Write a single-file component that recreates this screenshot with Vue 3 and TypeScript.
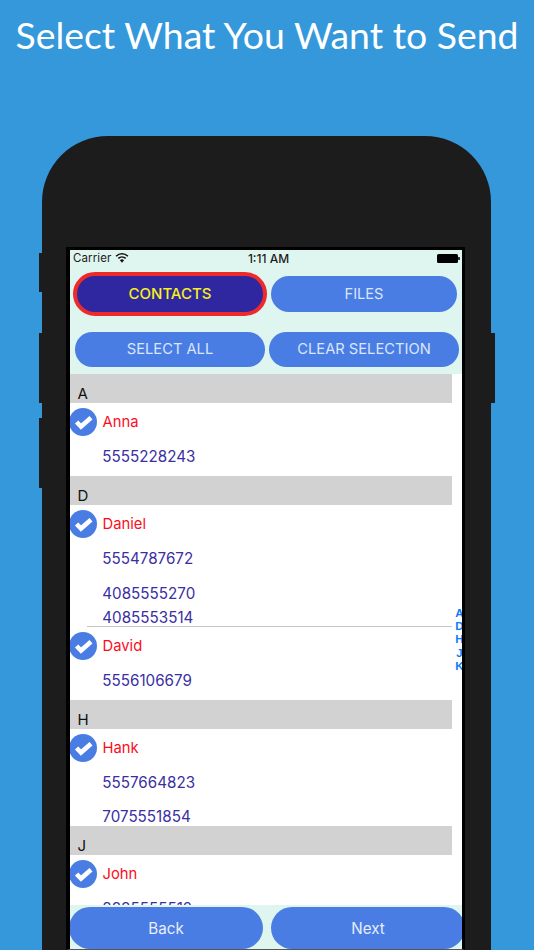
<script setup lang="ts">
interface Phone { num: string; gap: number }
interface Contact { name: string; phones: Phone[]; pad: number; divider?: boolean }
interface Section { letter: string; contacts: Contact[] }

const sections: Section[] = [
  { letter: 'A', contacts: [{ name: 'Anna', pad: 10, phones: [{ num: '5555228243', gap: 10 }] }] },
  {
    letter: 'D',
    contacts: [
      {
        name: 'Daniel',
        pad: 0,
        divider: true,
        phones: [
          { num: '5554787672', gap: 10 },
          { num: '4085555270', gap: 15 },
          { num: '4085553514', gap: 4 },
        ],
      },
      { name: 'David', pad: 10, phones: [{ num: '5556106679', gap: 10 }] },
    ],
  },
  {
    letter: 'H',
    contacts: [
      {
        name: 'Hank',
        pad: 0,
        phones: [
          { num: '5557664823', gap: 10 },
          { num: '7075551854', gap: 14 },
        ],
      },
    ],
  },
  { letter: 'J', contacts: [{ name: 'John', pad: 10, phones: [{ num: '8885555512', gap: 10 }] }] },
]
const indexLetters = ['A', 'D', 'H', 'J', 'K']
</script>

<template>
  <div class="page">
    <h1 class="title">Select What You Want to Send</h1>
    <div class="phone">
      <span class="side side-mute"></span>
      <span class="side side-up"></span>
      <span class="side side-down"></span>
      <span class="side side-power"></span>
      <div class="bezel">
        <div class="screen">
          <header class="top">
            <div class="status">
              <span class="carrier">Carrier</span>
              <svg class="wifi" viewBox="0 0 14 10" width="14" height="10">
                <path d="M7 9.8 4.9 7.2a3.1 3.1 0 0 1 4.2 0Z" fill="#111" />
                <path d="M3.3 5.4a5.4 5.4 0 0 1 7.4 0" fill="none" stroke="#111" stroke-width="1.5" />
                <path d="M1.1 3.2a8.6 8.6 0 0 1 11.8 0" fill="none" stroke="#111" stroke-width="1.5" />
              </svg>
              <span class="time">1:11 AM</span>
              <span class="battery"></span>
            </div>
            <div class="tabs">
              <button class="btn tab-active">CONTACTS</button>
              <button class="btn tab">FILES</button>
            </div>
            <div class="actions">
              <button class="btn action">SELECT ALL</button>
              <button class="btn action">CLEAR SELECTION</button>
            </div>
          </header>

          <div class="list">
            <section v-for="s in sections" :key="s.letter">
              <div class="section-head">{{ s.letter }}</div>
              <div
                v-for="c in s.contacts"
                :key="c.name"
                class="contact"
                :class="{ divided: c.divider }"
                :style="{ paddingBottom: c.pad + 'px' }"
              >
                <div class="name-row">
                  <svg class="check" viewBox="0 0 28 28" width="28" height="28">
                    <circle cx="14" cy="14" r="14" fill="#4a7de3" />
                    <path d="M7.6 14l4.4 4.6L22 9.8" fill="none" stroke="#fff" stroke-width="4.6" />
                  </svg>
                  <span class="name">{{ c.name }}</span>
                </div>
                <div
                  v-for="p in c.phones"
                  :key="p.num"
                  class="phone-num"
                  :style="{ marginTop: p.gap + 'px' }"
                >{{ p.num }}</div>
              </div>
            </section>
            <nav class="index">
              <span v-for="l in indexLetters" :key="l">{{ l }}</span>
            </nav>
          </div>

          <footer class="bottom">
            <button class="btn nav-back">Back</button>
            <button class="btn nav-next">Next</button>
          </footer>
        </div>
      </div>
    </div>
  </div>
</template>

<style>
html, body { margin: 0; padding: 0; }
</style>

<style scoped>
.page {
  width: 534px;
  height: 950px;
  overflow: hidden;
  background: #3498db;
  display: flex;
  flex-direction: column;
  font-family: Inter, "Liberation Sans", sans-serif;
}
.title {
  margin: 0;
  height: 136px;
  padding-top: 11px;
  box-sizing: border-box;
  text-align: center;
  font: 400 37.4px/48px Lato, "Liberation Sans", sans-serif;
  color: #fff;
  white-space: nowrap;
}
.phone {
  position: relative;
  flex: 1;
  min-height: 0;
  width: 449px;
  margin-left: 42px;
  padding: 111px 26px 0 24px;
  box-sizing: border-box;
  background: #1c1c1c;
  border-radius: 66px 66px 0 0;
  display: flex;
}
.side { position: absolute; background: #1c1c1c; width: 3px; }
.side-mute { left: -3px; top: 117px; height: 39px; }
.side-up { left: -3px; top: 197px; height: 70px; }
.side-down { left: -3px; top: 282px; height: 70px; }
.side-power { right: -4px; width: 4px; top: 197px; height: 70px; }
.bezel {
  flex: 1;
  display: flex;
  min-width: 0;
  border: solid #000;
  border-width: 3px 3px 1px 4px;
  border-bottom-color: #555;
}
.screen {
  flex: 1;
  min-width: 0;
  display: flex;
  flex-direction: column;
  background: #fff;
  overflow: hidden;
}
.top {
  background: #dff5ef;
  height: 124px;
  flex: none;
  box-sizing: border-box;
}
.status {
  height: 22px;
  display: flex;
  align-items: center;
  padding: 0 2px 6px 3px;
  box-sizing: border-box;
  font-size: 11.5px;
  color: #1c1c1c;
  position: relative;
}
.carrier { letter-spacing: 0.1px; }
.wifi { margin-left: 4px; margin-top: -1px; }
.time {
  position: absolute;
  left: 0;
  right: 0;
  top: 2px;
  line-height: 13px;
  text-align: center;
  font-size: 12px;
  font-weight: 500;
  transform: translateX(2.5px);
}
.battery {
  margin-left: auto;
  margin-right: 2px;
  width: 21px;
  height: 9px;
  background: #000;
  border-radius: 1.5px;
  position: relative;
}
.battery::after {
  content: "";
  position: absolute;
  left: 21px;
  top: 3px;
  width: 1.5px;
  height: 3px;
  background: #333;
}
.btn {
  border: 0;
  padding: 0;
  margin: 0;
  font-family: inherit;
  background: #4a7de3;
  color: #d9e6fb;
  box-sizing: border-box;
}
.tabs {
  display: flex;
  align-items: center;
  gap: 4px;
  padding-left: 3px;
}
.tab-active {
  width: 194px;
  height: 44px;
  border: 4px solid #ee2a2a;
  border-radius: 22px;
  background: #2e27a0;
  color: #f8f01a;
  font-size: 15px;
  font-weight: 500;
  padding-bottom: 1px;
}
.tab {
  width: 186px;
  height: 36px;
  border-radius: 18px;
  font-size: 14.6px;
  padding-bottom: 1px;
}
.actions {
  display: flex;
  gap: 4px;
  padding-left: 5px;
  margin-top: 16px;
}
.action {
  width: 190px;
  height: 34.5px;
  border-radius: 17.25px;
  font-size: 14.7px;
}
.list {
  flex: 1;
  min-height: 0;
  overflow: hidden;
  position: relative;
  background: #fff;
}
.section-head {
  width: 382px;
  height: 29px;
  box-sizing: border-box;
  background: #d2d2d2;
  padding: 10px 0 0 7.5px;
  font-size: 15px;
  line-height: 19px;
  color: #111;
}
.contact { position: relative; }
.divided::after {
  content: "";
  position: absolute;
  left: 17px;
  width: 365px;
  bottom: 0;
  height: 1px;
  background: #c4c4c4;
}
.name-row {
  display: flex;
  align-items: center;
  padding-top: 5px;
  height: 33px;
  box-sizing: border-box;
  margin-left: -1px;
}
.check { flex: none; }
.name {
  margin-left: 5.5px;
  font-size: 14.8px;
  color: #fb0d1b;
}
.phone-num {
  height: 20px;
  line-height: 22px;
  padding-left: 32.3px;
  font-size: 15.2px;
  color: #3a2fa3;
}
.index {
  position: absolute;
  right: 0;
  top: 233px;
  width: 5px;
  display: flex;
  flex-direction: column;
  align-items: center;
  font: 700 11.5px/13.2px "Liberation Sans", sans-serif;
  color: #0f7bf5;
}
.bottom {
  flex: none;
  height: 44px;
  background: #dff5ef;
  display: flex;
  align-items: flex-end;
  gap: 8px;
}
.nav-back, .nav-next {
  height: 42px;
  border-radius: 21px;
  font-size: 15.2px;
  color: #e6eefc;
  flex: none;
  padding-top: 1px;
}
.nav-back { width: 194px; margin-left: -1px; }
.nav-next { width: 194px; }
</style>
